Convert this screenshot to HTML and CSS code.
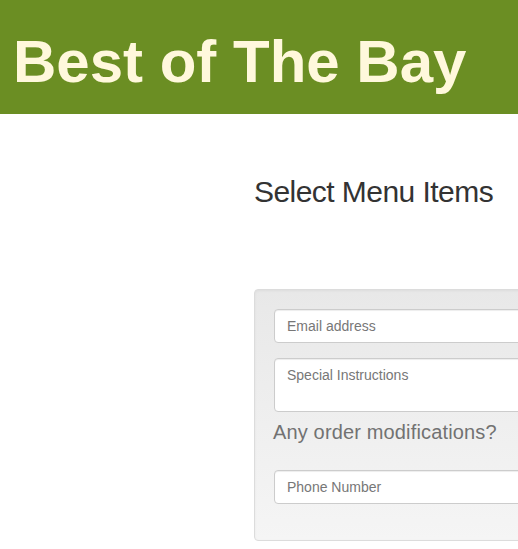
FILE: index.html
```html
<!DOCTYPE html>
<html lang="en">
<head>
<meta charset="utf-8">
<title>Best of The Bay</title>
<link rel="stylesheet" href="styles.css">
</head>
<body>
<header class="site-header">
  <h1 class="brand">Best of The Bay</h1>
</header>
<main class="content">
  <h2 class="section-title">Select Menu Items</h2>
  <form class="well">
    <div class="form-group">
      <input class="form-control" type="email" placeholder="Email address">
    </div>
    <div class="form-group">
      <textarea class="form-control textarea" rows="2" placeholder="Special Instructions"></textarea>
    </div>
    <p class="mods">Any order modifications?</p>
    <div class="form-group last">
      <input class="form-control" type="tel" placeholder="Phone Number">
    </div>
  </form>
</main>
</body>
</html>
```
FILE: styles.css
```css
html, body {
  margin: 0;
  padding: 0;
  overflow: hidden;
  background: #fff;
  font-family: "Liberation Sans", Arial, sans-serif;
}

.site-header {
  background: #6b8e23;
  padding: 32px 13px 22px;
}

.brand {
  margin: 0;
  font-size: 60px;
  line-height: 1;
  font-weight: bold;
  color: #fff8dc;
  white-space: nowrap;
}

.content {
  padding-left: 254px;
  overflow: hidden;
}

.section-title {
  margin: 61px 0 0;
  font-size: 30px;
  line-height: 33px;
  font-weight: normal;
  letter-spacing: -0.55px;
  color: #333;
  white-space: nowrap;
}

.well {
  margin-top: 81px;
  width: 500px;
  padding: 19px;
  border: 1px solid #dcdcdc;
  border-radius: 4px;
  background: linear-gradient(to bottom, #e8e8e8 0%, #f5f5f5 100%);
  box-shadow: inset 0 1px 3px rgba(0, 0, 0, 0.05);
}

.form-group {
  margin-bottom: 15px;
}

.form-group.last {
  margin-bottom: 17px;
}

.form-control {
  display: block;
  box-sizing: border-box;
  width: 100%;
  height: 34px;
  margin: 0;
  padding: 6px 12px;
  font-family: "Liberation Sans", Arial, sans-serif;
  font-size: 14px;
  line-height: 20px;
  color: #555;
  background: #fff;
  border: 1px solid #ccc;
  border-radius: 4px;
  box-shadow: inset 0 1px 1px rgba(0, 0, 0, 0.075);
  outline: none;
}

.form-control::placeholder {
  color: #777;
  opacity: 1;
}

.textarea {
  height: 54px;
  resize: none;
}

.mods {
  margin: -6px 0 27px -1px;
  font-size: 20px;
  line-height: 22px;
  letter-spacing: 0.15px;
  color: #727272;
  white-space: nowrap;
}
```
